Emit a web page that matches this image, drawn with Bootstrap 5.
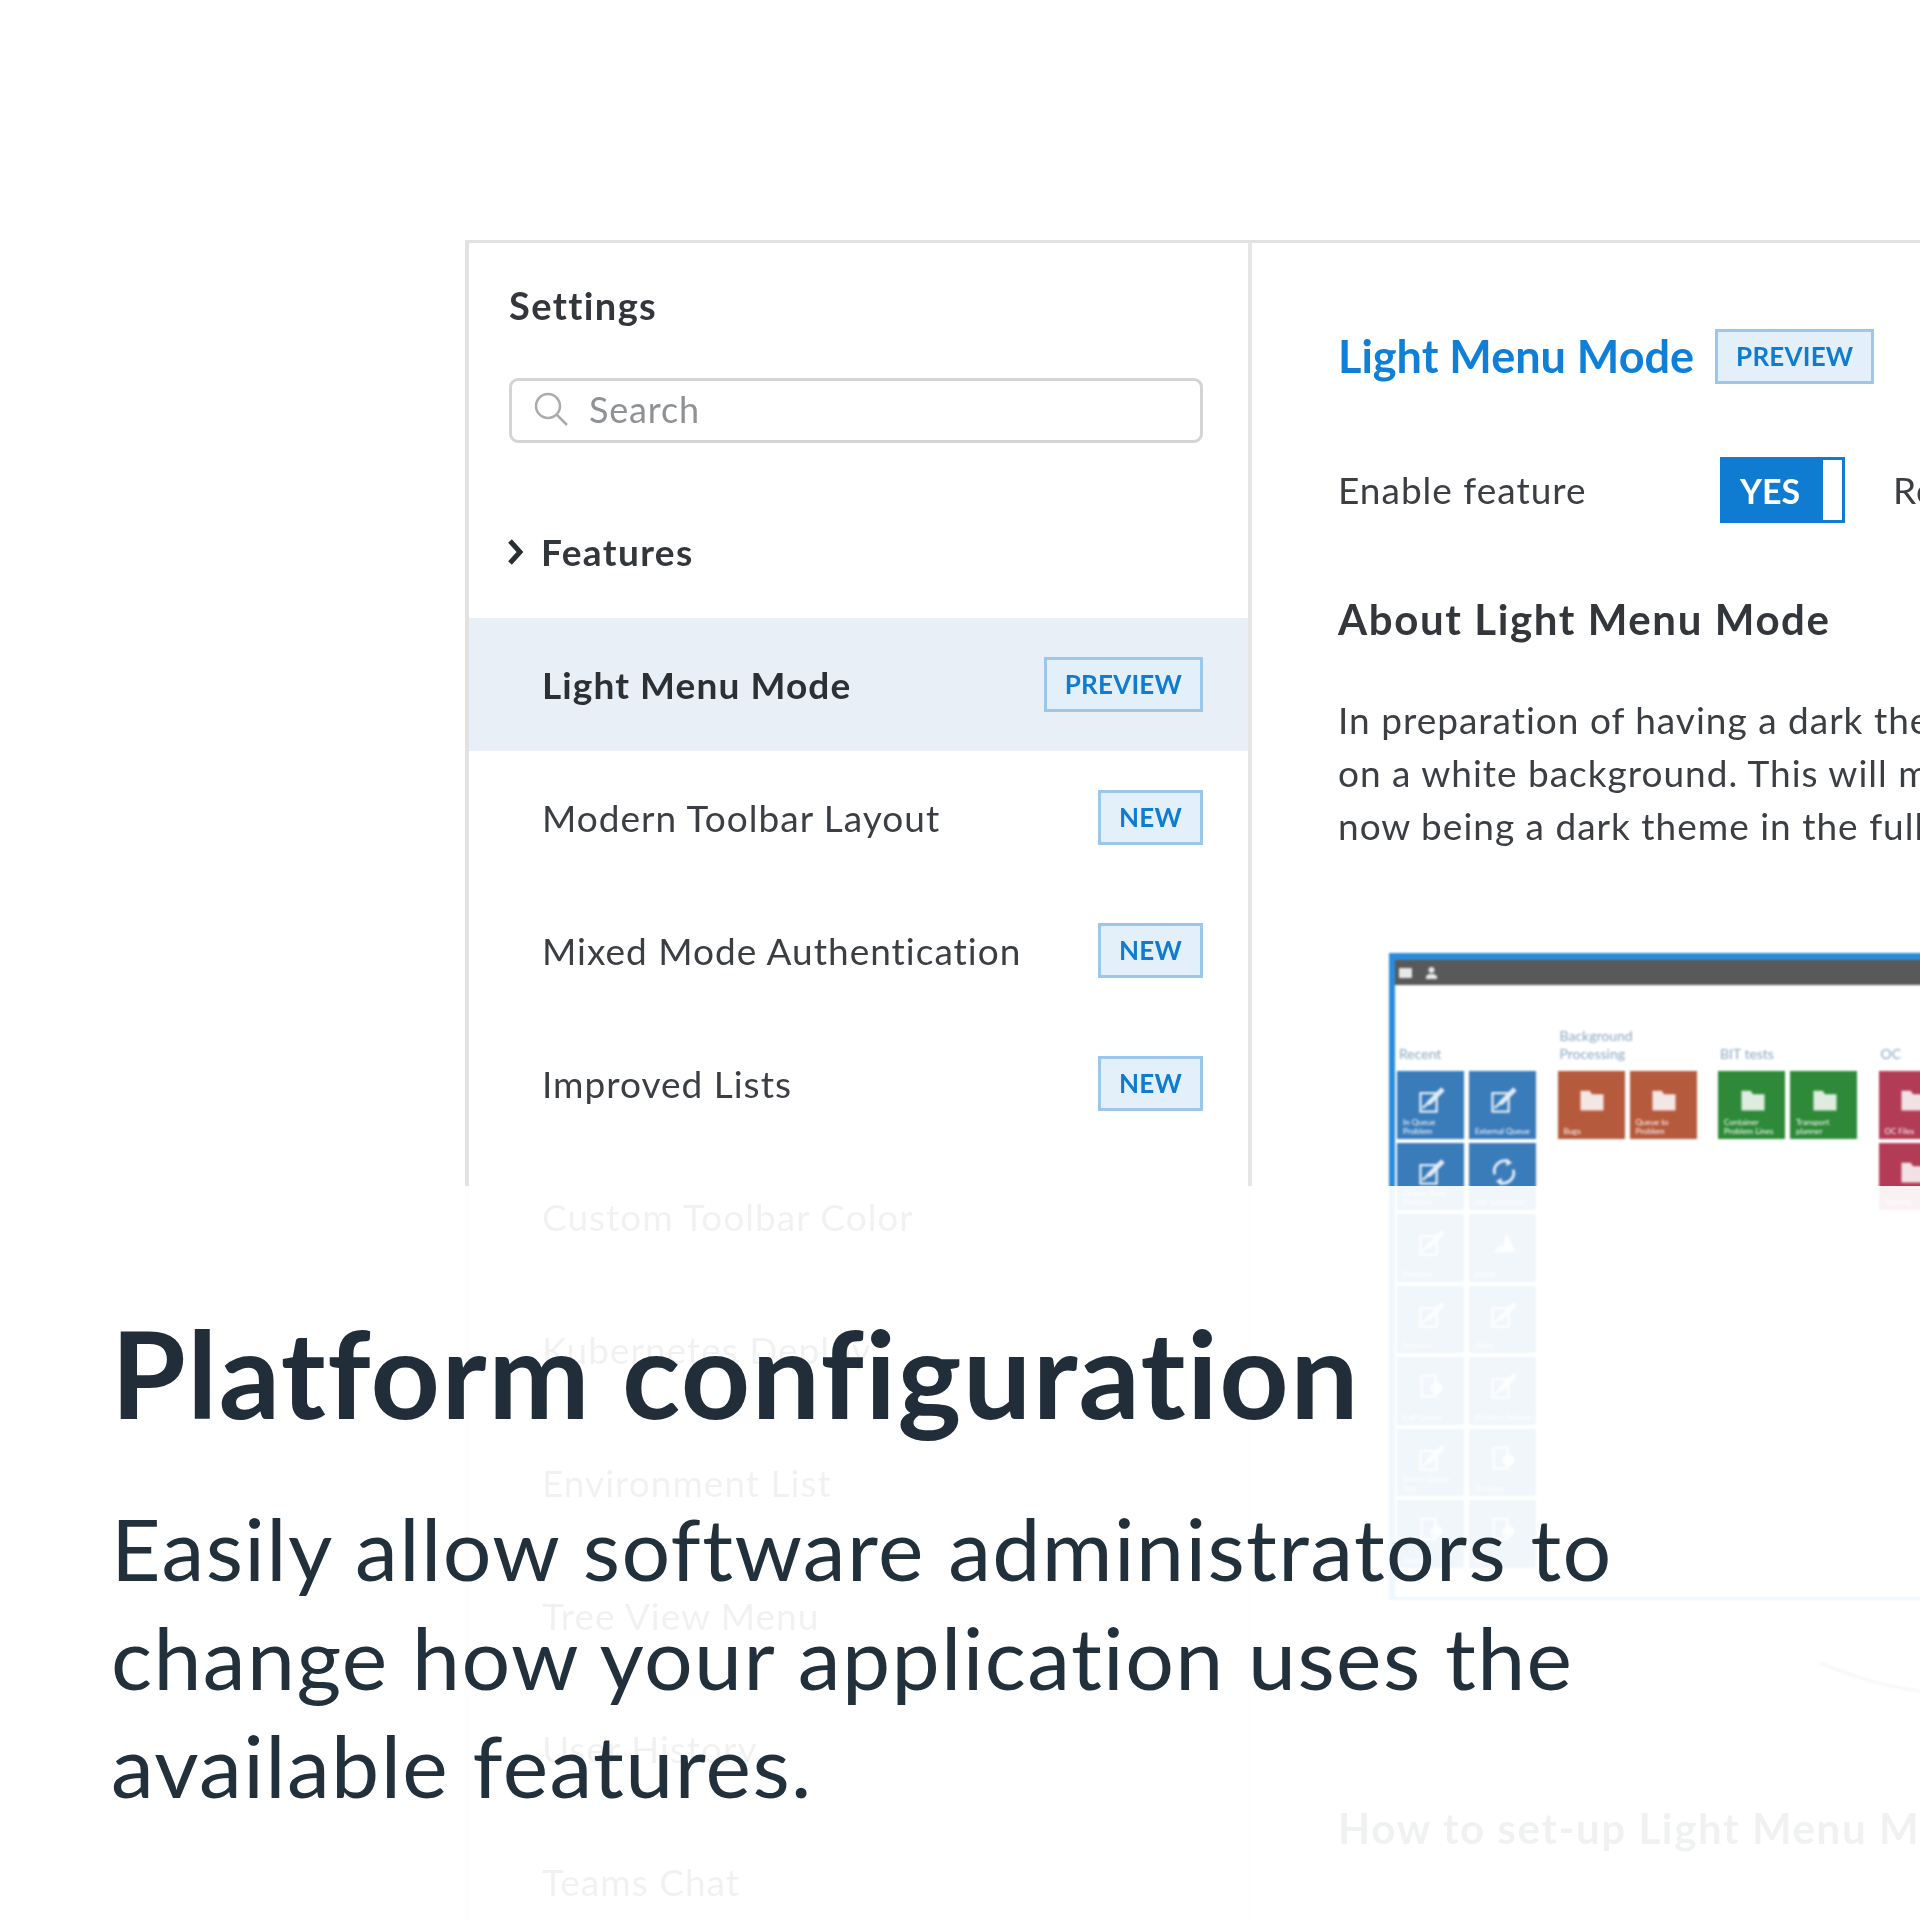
<!DOCTYPE html>
<html lang="en">
<head>
  <meta charset="UTF-8" />
  <title>Platform configuration</title>
  <meta name="viewport" content="width=device-width, initial-scale=1" />
  <link href="https://cdn.jsdelivr.net/npm/bootstrap@5.3.0/dist/css/bootstrap.min.css" rel="stylesheet" />
  <style>
    body {
      background: #fff;
      font-family: "Lato", "Noto Sans", sans-serif;
      color: #3b3f44;
    }

    .stage {
      width: 1920px;
      height: 1920px;
      overflow: hidden;
      padding: 240px 0 0 465px;
    }

    .panel {
      width: 2400px;
      height: 1800px;
      border: solid #e2e2e2;
      border-width: 3px 0 0 4px;
      filter: blur(0.6px);
    }

    .side {
      width: 783px;
      flex-shrink: 0;
      border-right: 4px solid #e6e6e6;
      padding-top: 39px;
    }

    .side-head {
      padding: 0 45px 0 40px;
    }

    .side-title {
      font-size: 38px;
      line-height: 46px;
      font-weight: 700;
      color: #33373b;
      letter-spacing: 1.4px;
    }

    .search-box {
      height: 65px;
      margin-top: 50px;
      border: 3px solid #d4d4d4;
      border-radius: 9px;
      padding: 0 0 3px 21px;
      gap: 20px;
      font-size: 36px;
      color: #8e9195;
      letter-spacing: 0.8px;
    }

    .feat-row {
      margin-top: 86px;
      margin-bottom: 43px;
      height: 46px;
      gap: 17px;
      padding-left: 37px;
      font-size: 37px;
      font-weight: 700;
      color: #33373b;
      letter-spacing: 1.4px;
    }

    .menu-item {
      height: 133px;
      padding: 0 45px 0 73px;
      font-size: 37px;
      letter-spacing: 1px;
    }

    .menu-item.on {
      background: #e8eff6;
      font-weight: 700;
      color: #2c3035;
      letter-spacing: 1.1px;
    }

    .tag {
      height: 55px;
      padding: 0 18px;
      background: #e3f0fa;
      border: 3px solid #9cc6ea;
      font-size: 26px;
      font-weight: 700;
      color: #0f7cd2;
      letter-spacing: 0.2px;
    }

    .content {
      padding: 86px 0 0 86px;
      white-space: nowrap;
    }

    .feat-title {
      font-size: 45px;
      line-height: 55px;
      font-weight: 700;
      color: #0f7fd8;
      margin-right: 21px;
    }

    .toggle-row {
      margin-top: 73px;
      height: 66px;
      font-size: 37px;
      letter-spacing: 1px;
    }

    .toggle-label {
      width: 382px;
    }

    .toggle-box {
      width: 125px;
      height: 66px;
      border: 3px solid #0f7cd2;
      margin-right: 48px;
    }

    .toggle-on {
      width: 100px;
      padding-right: 6px;
      background: #0f7cd2;
      color: #fff;
      font-size: 34px;
      font-weight: 700;
      letter-spacing: 0;
    }

    .about-title {
      margin: 72px 0 0;
      font-size: 42px;
      line-height: 48px;
      font-weight: 700;
      color: #33373b;
      letter-spacing: 1.6px;
    }

    .about-text {
      margin: 50px 0 0;
      font-size: 37px;
      line-height: 53px;
      letter-spacing: 1px;
    }

    .mini {
      width: 900px;
      height: 647px;
      margin: 101px 0 0 51px;
      border: solid #2b8bdb;
      border-width: 7px 0 3px 6px;
      filter: blur(1.1px);
    }

    .mini-bar {
      height: 25px;
      background: #595959;
      padding-left: 4px;
      gap: 14px;
    }

    .mini-groups {
      padding: 42px 0 0 2px;
      gap: 20px;
    }

    .mini-group {
      width: 140.5px;
    }

    .mini-label {
      width: 90px;
      height: 36px;
      margin-bottom: 8px;
      padding-left: 2px;
      font-size: 14px;
      line-height: 18px;
      color: #8aa9c4;
      white-space: normal;
    }

    .tile-grid {
      display: grid;
      grid-template-columns: 67px 67px;
      grid-auto-rows: 67.5px;
      gap: 4px 5px;
    }

    .tile {
      color: #fff;
      font-size: 8px;
      line-height: 9px;
      padding: 0 4px 3px 6px;
      white-space: normal;
    }

    .tile svg {
      width: 30px;
      height: 30px;
      margin: 14px auto auto;
      flex-shrink: 0;
      opacity: 0.85;
    }

    .t-blue { background: #3a7bba; }
    .t-red { background: #b65a3d; }
    .t-green { background: #2e8a38; }
    .t-wine { background: #b23c56; }

    .mini-trace {
      right: -40px;
      top: 700px;
    }

    .howto-title {
      margin: 203px 0 0;
      font-size: 42px;
      line-height: 50px;
      font-weight: 700;
      color: #33373b;
      letter-spacing: 1.6px;
    }

    .howto-text {
      margin: 56px 0 0;
      font-size: 37px;
      line-height: 53px;
      letter-spacing: 1px;
    }

    .veil {
      position: absolute;
      left: 0;
      right: 0;
      top: 1186px;
      height: 734px;
      background: rgba(255, 255, 255, 0.93);
      padding: 116px 0 0 111px;
      color: #22303c;
    }

    .hero-title {
      margin: 0;
      font-size: 121px;
      line-height: 142px;
      font-weight: 700;
      color: #212e39;
      letter-spacing: 1.5px;
    }

    .hero-text {
      margin: 50px 0 0;
      width: 1560px;
      font-size: 86px;
      line-height: 108.5px;
      letter-spacing: 1.4px;
    }
  </style>
</head>
<body>
  <svg width="0" height="0" class="position-absolute">
    <symbol id="i-edit" viewBox="0 0 26 26">
      <path d="M3 7h14v16H3z" fill="none" stroke="#fff" stroke-width="2" />
      <path d="M8 18l1-4L21 2l3 3-12 12z" fill="#fff" />
      <path d="M5 20l5-5" stroke="#fff" stroke-width="2" />
    </symbol>
    <symbol id="i-folder" viewBox="0 0 26 26">
      <path d="M3 5h8l2 3h10v14H3z" fill="#fff" />
    </symbol>
    <symbol id="i-sync" viewBox="0 0 26 26">
      <path d="M5 15a9 9 0 0 1 12-11M21 11a9 9 0 0 1-12 11" fill="none" stroke="#fff" stroke-width="2.5" />
      <path d="M15 1l5 4-5 3zM11 25l-5-4 5-3z" fill="#fff" />
    </symbol>
    <symbol id="i-tri" viewBox="0 0 26 26">
      <path d="M15 4l8 17H3l7-6 2 2z" fill="#fff" />
    </symbol>
    <symbol id="i-disc" viewBox="0 0 26 26">
      <path d="M4 4h12v18H4z" fill="none" stroke="#fff" stroke-width="2" />
      <circle cx="17" cy="15" r="5" fill="#fff" />
    </symbol>
  </svg>

  <div class="stage">
    <div class="panel d-flex">
      <aside class="side">
        <div class="side-head">
          <div class="side-title">Settings</div>
          <div class="search-box d-flex align-items-center">
            <svg width="36" height="36" viewBox="0 0 36 36" fill="none" stroke="#a9acaf" stroke-width="2.5">
              <circle cx="15" cy="15" r="12" />
              <path d="M24 24l10 10" />
            </svg>
            <span>Search</span>
          </div>
        </div>
        <div class="feat-row d-flex align-items-center">
          <svg width="18" height="30" viewBox="0 0 18 30" fill="none" stroke="#2b2f33" stroke-width="5">
            <path d="M4 4l10 11L4 26" />
          </svg>
          <span>Features</span>
        </div>
        <div class="menu-item on d-flex align-items-center justify-content-between">
          <span>Light Menu Mode</span><span class="tag d-flex align-items-center">PREVIEW</span>
        </div>
        <div class="menu-item d-flex align-items-center justify-content-between">
          <span>Modern Toolbar Layout</span><span class="tag d-flex align-items-center">NEW</span>
        </div>
        <div class="menu-item d-flex align-items-center justify-content-between">
          <span>Mixed Mode Authentication</span><span class="tag d-flex align-items-center">NEW</span>
        </div>
        <div class="menu-item d-flex align-items-center justify-content-between">
          <span>Improved Lists</span><span class="tag d-flex align-items-center">NEW</span>
        </div>
        <div class="menu-item d-flex align-items-center">Custom Toolbar Color</div>
        <div class="menu-item d-flex align-items-center">Kubernetes Deploy</div>
        <div class="menu-item d-flex align-items-center">Environment List</div>
        <div class="menu-item d-flex align-items-center">Tree View Menu</div>
        <div class="menu-item d-flex align-items-center">User History</div>
        <div class="menu-item d-flex align-items-center">Teams Chat</div>
      </aside>

      <main class="content">
        <div class="d-flex align-items-center">
          <span class="feat-title">Light Menu Mode</span><span class="tag d-flex align-items-center">PREVIEW</span>
        </div>
        <div class="toggle-row d-flex align-items-center">
          <span class="toggle-label">Enable feature</span>
          <span class="toggle-box d-flex"><span class="toggle-on d-flex align-items-center justify-content-center">YES</span></span>
          <span>Release notes</span>
        </div>
        <h2 class="about-title">About Light Menu Mode</h2>
        <p class="about-text">
          In preparation of having a dark theme in the future, menus can be shown<br />
          on a white background. This will make the menu easier to read, without<br />
          now being a dark theme in the full application.
        </p>
        <div class="mini position-relative">
          <div class="mini-bar d-flex align-items-center">
            <svg width="13" height="10" viewBox="0 0 13 10"><rect width="13" height="10" rx="1" fill="#e8e8e8" /></svg>
            <svg width="11" height="12" viewBox="0 0 11 12"><circle cx="5.5" cy="3" r="3" fill="#e8e8e8" /><path d="M0 12V9l3-2h5l3 2v3z" fill="#e8e8e8" /></svg>
          </div>
          <div class="mini-groups d-flex align-items-start" id="miniGroups"></div>
          <svg class="mini-trace position-absolute" width="512" height="50" viewBox="0 0 512 50" fill="none" stroke="#888" stroke-width="3">
            <path d="M3 3c40 16 70 26 130 32" />
          </svg>
        </div>
        <h2 class="howto-title">How to set-up Light Menu Mode</h2>
        <p class="howto-text">Light Menu Mode can be turned on with a single switch</p>
      </main>
    </div>
  </div>

  <div class="veil">
    <h1 class="hero-title">Platform configuration</h1>
    <p class="hero-text">Easily allow software administrators to change how your application uses the available features.</p>
  </div>

  <script>
    const groups = [
      { label: "Recent", color: "t-blue", tiles: [
        ["i-edit", "In Queue Problem"], ["i-edit", "External Queue"],
        ["i-edit", "Queue Tests Problem"], ["i-sync", "Job Scheduler"],
        ["i-edit", "Problem"], ["i-tri", "Alerts"],
        ["i-edit", "Services"], ["i-edit", "Tasks"],
        ["i-disc", "Call Queue"], ["i-edit", "Problem Solved"],
        ["i-edit", "Issues Queue Test"], ["i-disc", "Tracking"],
        ["i-disc", "Queue"], ["i-disc", "Notes"]
      ] },
      { label: "Background Processing", color: "t-red", tiles: [["i-folder", "Bugs"], ["i-folder", "Queue to Problem"]] },
      { label: "BIT tests", color: "t-green", tiles: [["i-folder", "Container Problem Lines"], ["i-folder", "Transport planner"]] },
      { label: "OC", color: "t-wine", tiles: [["i-folder", "OC Files"], ["i-folder", "OC Tests"], ["i-folder", "Reports"], ["i-folder", "Rules"]] }
    ];

    document.getElementById("miniGroups").innerHTML = groups.map((g) => `
      <div class="mini-group">
        <div class="mini-label d-flex align-items-end">${g.label}</div>
        <div class="tile-grid">
          ${g.tiles.map((t) => `
            <div class="tile d-flex flex-column ${g.color}">
              <svg><use href="#${t[0]}" /></svg>
              <span>${t[1]}</span>
            </div>`).join("")}
        </div>
      </div>`).join("");
  </script>
  <script src="https://cdn.jsdelivr.net/npm/bootstrap@5.3.0/dist/js/bootstrap.bundle.min.js"></script>
</body>
</html>
